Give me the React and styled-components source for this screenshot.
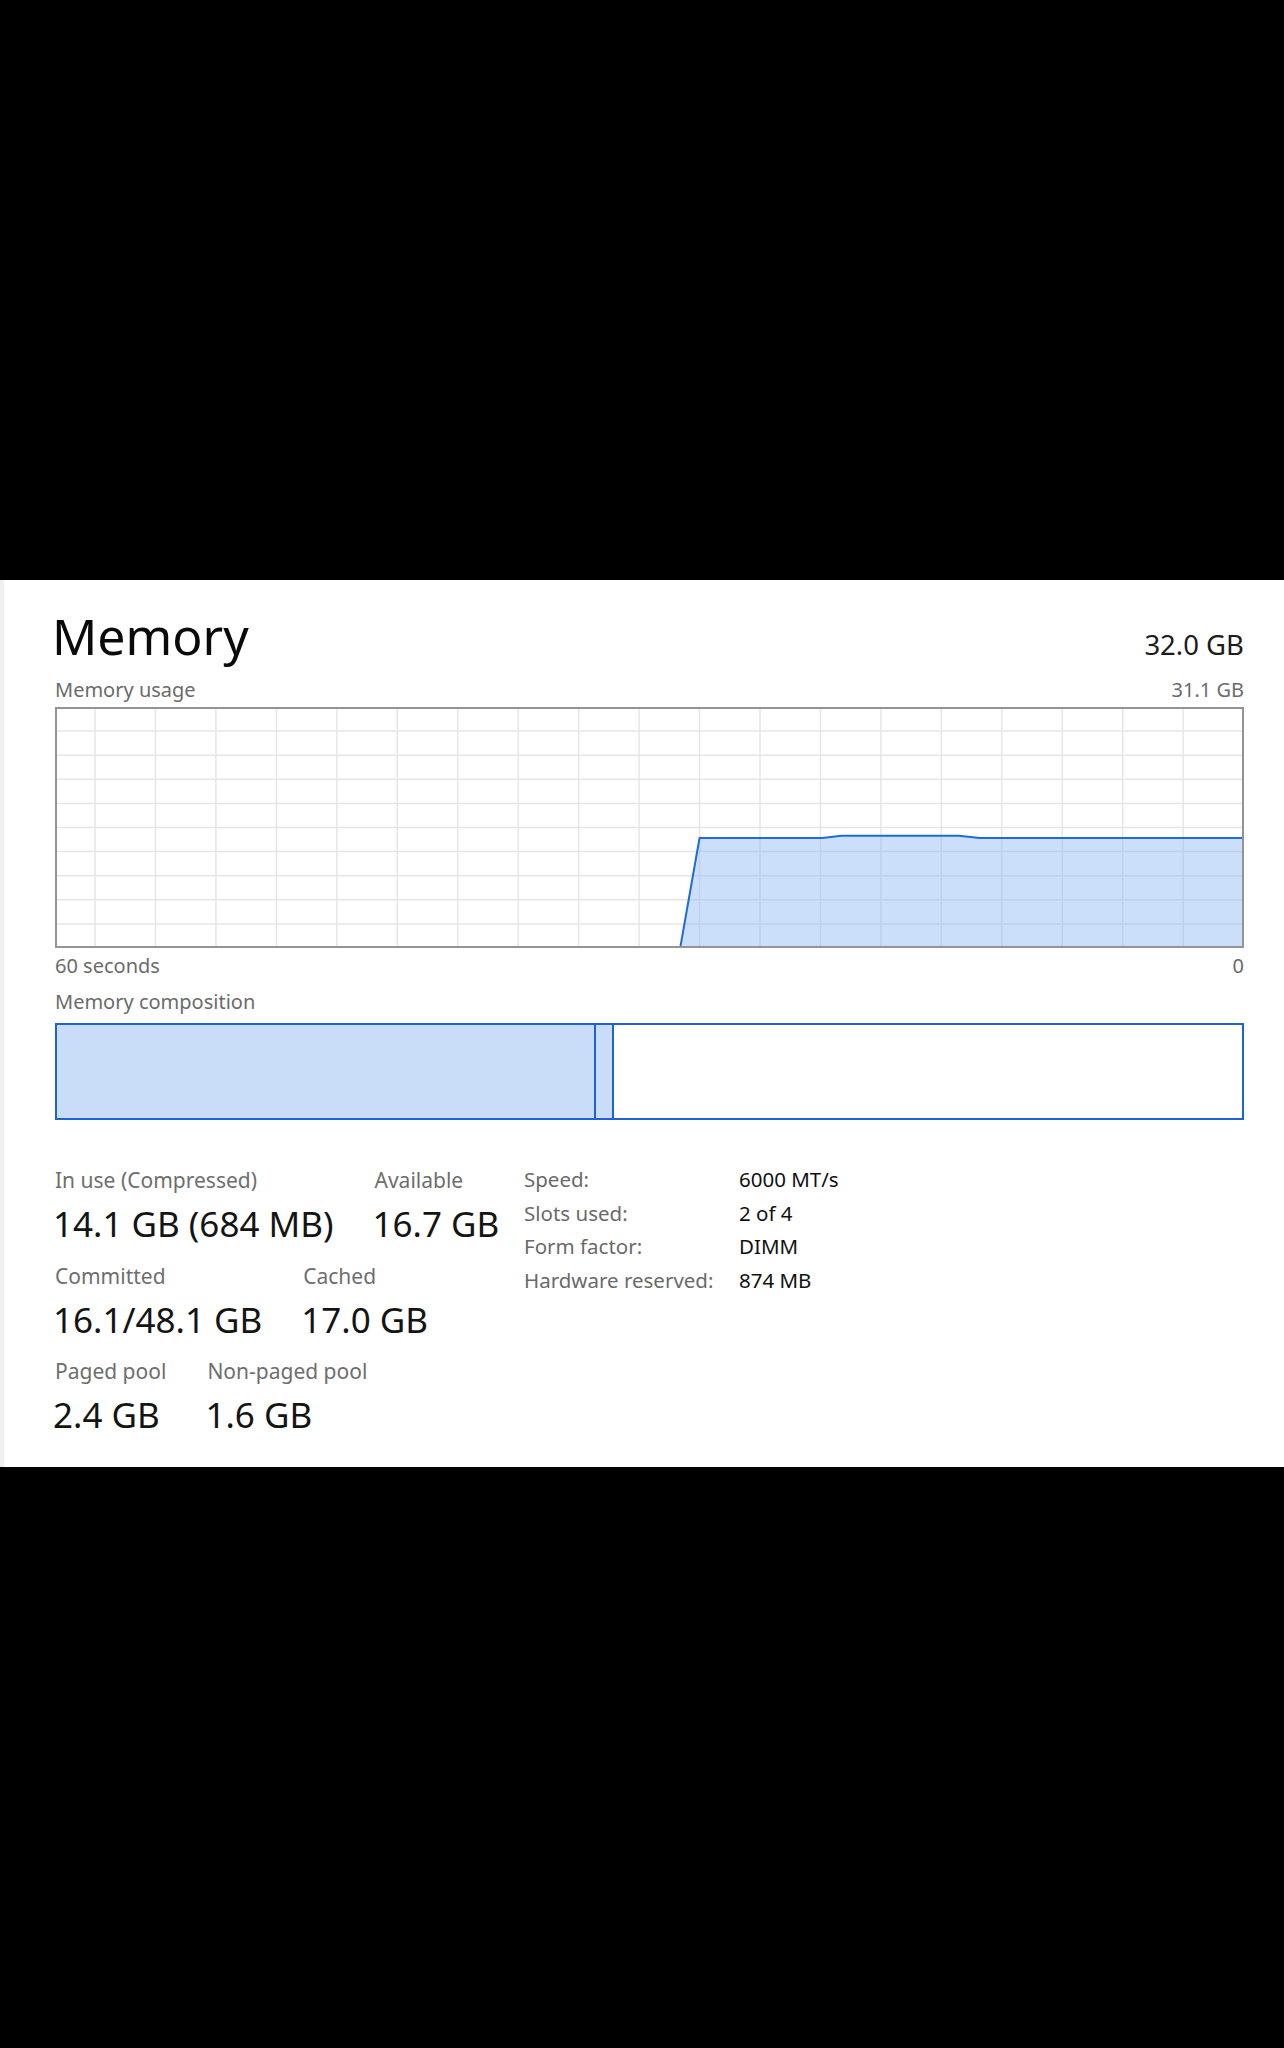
import React from "react";
import styled, { createGlobalStyle } from "styled-components";

const GlobalStyle = createGlobalStyle`
  html, body {
    margin: 0;
    padding: 0;
    background: #000;
  }
  body {
    font-family: "Noto Sans", "Open Sans", sans-serif;
  }
`;

const Panel = styled.section`
  margin-top: 580px;
  background: #fff;
  border-left: 4px solid #efefef;
  padding: 26px 40px 31px 51px;
  color: #111;
`;

const Row = styled.div`
  display: flex;
  justify-content: space-between;
  align-items: baseline;
  margin-top: ${(p) => p.$top || 0}px;
`;

const Title = styled.h1`
  margin: 0 0 0 -3px;
  font-size: 50px;
  line-height: 60px;
  font-weight: 400;
  color: #0a0a0a;
`;

const Total = styled.div`
  font-size: 27.5px;
  line-height: 30px;
  color: #1c1c1c;
`;

const Caption = styled.div`
  font-size: 20px;
  line-height: 24px;
  color: #6b6b6b;
`;

const Graph = styled.div`
  margin-top: 5px;
  height: 241px;
  box-sizing: border-box;
  border: 2px solid #949494;
  background: #fff;

  svg {
    display: block;
    width: 100%;
    height: 100%;
  }
`;

const Composition = styled.div`
  margin-top: 9px;
  display: flex;
  height: 97px;
  box-sizing: border-box;
  border: 2px solid #1d63d6;
`;

const Segment = styled.div`
  flex: ${(p) => (p.$grow ? "1 1 auto" : "none")};
  width: ${(p) => (p.$w ? `${p.$w}px` : "auto")};
  background: ${(p) => p.$fill || "#fff"};
  border-right: ${(p) => (p.$divider ? "2px solid #1d63d6" : "none")};
`;

const Stats = styled.div`
  margin-top: 47px;
  display: grid;
  grid-template-columns: 469px auto;
  align-items: start;
`;

const StatColumn = styled.div`
  display: flex;
  flex-direction: column;
  gap: 17.5px;
`;

const StatRow = styled.div`
  display: flex;
  gap: 41px;
`;

const Stat = styled.div`
  display: flex;
  flex-direction: column;
  gap: 10px;
`;

const Label = styled.div`
  font-size: 21px;
  line-height: 26px;
  color: #6e6e6e;
  white-space: nowrap;
`;

const Value = styled.div`
  font-size: 35px;
  line-height: 42px;
  color: #141414;
  white-space: nowrap;
  margin-left: -2px;
`;

const Details = styled.dl`
  margin: -4px 0 0 0;
  display: grid;
  grid-template-columns: 215px auto;
  font-size: 20.5px;
  line-height: 33.7px;

  dt {
    color: #6a6a6a;
    white-space: nowrap;
  }
  dd {
    margin: 0;
    color: #111;
    white-space: nowrap;
  }
`;

const W = 1184;
const H = 237;

const usage = [
  [623, H],
  [642, 129],
  [764.5, 129],
  [784, 126.7],
  [901, 126.7],
  [922, 129],
  [W, 129],
];

function UsageChart() {
  const vLines = Array.from({ length: 19 }, (_, k) => 38 + 60.4 * k);
  const hLines = Array.from({ length: 9 }, (_, k) => 24.1 * (k + 1) - 2);
  const line = usage.map(([x, y]) => `${x},${y}`).join(" ");
  const area = `${line} ${W},${H}`;
  return (
    <svg viewBox={`0 0 ${W} ${H}`} preserveAspectRatio="none">
      {vLines.map((x) => (
        <line key={`v${x}`} x1={x} x2={x} y1={0} y2={H} stroke="#e6e6e6" strokeWidth="1.5" />
      ))}
      {hLines.map((y) => (
        <line key={`h${y}`} x1={0} x2={W} y1={y} y2={y} stroke="#e6e6e6" strokeWidth="1.5" />
      ))}
      <polygon points={area} fill="rgba(140,185,245,0.45)" />
      <polyline points={line} fill="none" stroke="#1f6bd9" strokeWidth="2" strokeLinejoin="round" />
    </svg>
  );
}

const statRows = [
  [
    ["In use (Compressed)", "14.1 GB (684 MB)"],
    ["Available", "16.7 GB"],
  ],
  [
    ["Committed", "16.1/48.1 GB"],
    ["Cached", "17.0 GB"],
  ],
  [
    ["Paged pool", "2.4 GB"],
    ["Non-paged pool", "1.6 GB"],
  ],
];

const details = [
  ["Speed:", "6000 MT/s"],
  ["Slots used:", "2 of 4"],
  ["Form factor:", "DIMM"],
  ["Hardware reserved:", "874 MB"],
];

export default function App() {
  return (
    <>
      <GlobalStyle />
      <Panel>
        <Row>
          <Title>Memory</Title>
          <Total>32.0 GB</Total>
        </Row>
        <Row $top={12}>
          <Caption>Memory usage</Caption>
          <Caption>31.1 GB</Caption>
        </Row>
        <Graph>
          <UsageChart />
        </Graph>
        <Row $top={6}>
          <Caption>60 seconds</Caption>
          <Caption>0</Caption>
        </Row>
        <Row $top={12}>
          <Caption>Memory composition</Caption>
        </Row>
        <Composition>
          <Segment $w={537} $fill="#c9ddf9" $divider />
          <Segment $w={16} $fill="#c9ddf9" $divider />
          <Segment $grow />
        </Composition>
        <Stats>
          <StatColumn>
            {statRows.map((row, i) => (
              <StatRow key={i}>
                {row.map(([label, value]) => (
                  <Stat key={label}>
                    <Label>{label}</Label>
                    <Value>{value}</Value>
                  </Stat>
                ))}
              </StatRow>
            ))}
          </StatColumn>
          <Details>
            {details.map(([k, v]) => (
              <React.Fragment key={k}>
                <dt>{k}</dt>
                <dd>{v}</dd>
              </React.Fragment>
            ))}
          </Details>
        </Stats>
      </Panel>
    </>
  );
}
